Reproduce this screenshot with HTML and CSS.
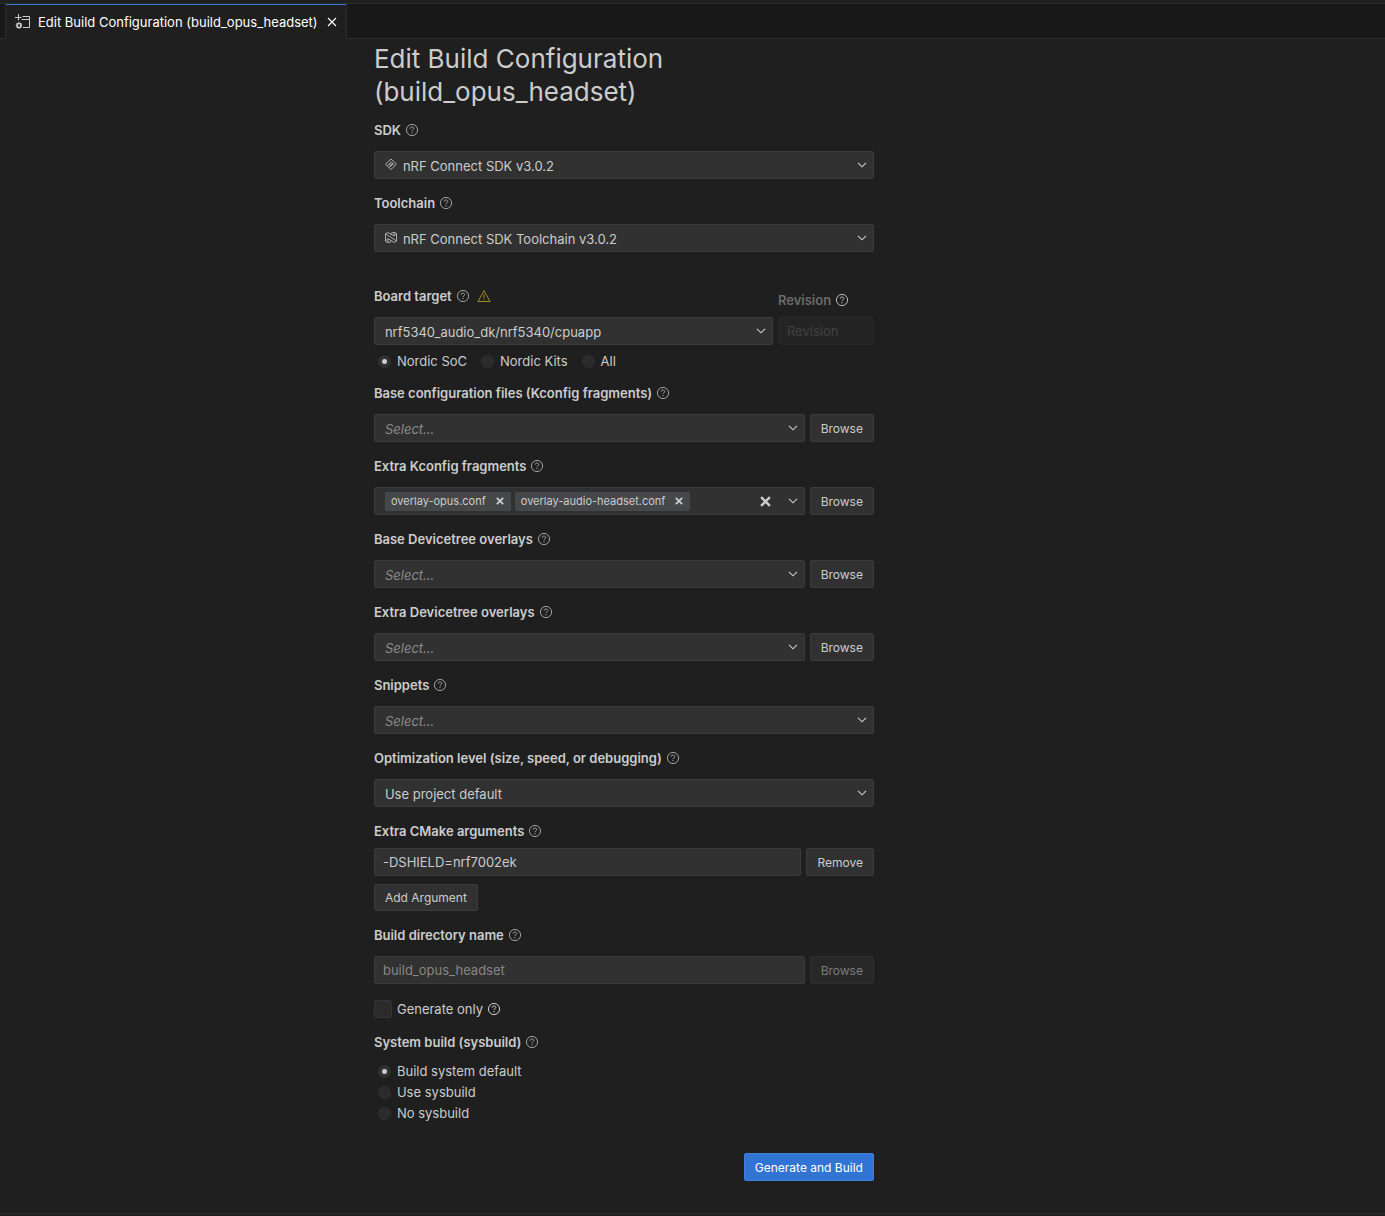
FILE: index.html
```html
<!DOCTYPE html>
<html lang="en">
<head>
<meta charset="utf-8">
<title>Edit Build Configuration</title>
<link rel="stylesheet" href="styles.css">
</head>
<body>
<svg class="defs" aria-hidden="true">
  <symbol id="help" viewBox="0 0 14 14"><circle cx="7" cy="7" r="5.6" fill="none" stroke="currentColor" stroke-width="1"/><path d="M5.2 5.7C5.2 4.5 6 4 7 4s1.8.6 1.8 1.6C8.800 6.700 7 6.700 7 8.100" fill="none" stroke="currentColor" stroke-width="1"/><circle cx="7" cy="9.700" r=".65" fill="currentColor"/></symbol>
  <symbol id="chevron" viewBox="0 0 10 6"><path d="M1 .8l4 4 4-4" fill="none" stroke="currentColor" stroke-width="1.100"/></symbol>
  <symbol id="cross" viewBox="0 0 10 10"><path d="M1 1l8 8M9 1l-8 8" fill="none" stroke="currentColor" stroke-width="2.200"/></symbol>
</svg>

<header class="tabs" role="tablist">
  <div class="tab" role="tab" aria-selected="true">
    <svg class="tab-icon" viewBox="0 0 16 16" fill="none" stroke="currentColor" aria-hidden="true"><path d="M3.500 0v6.500M0 3.500h6.500M7.500 2.500h7v11H8M6.500 5.500h8" stroke-width="1"/><circle cx="4" cy="11.500" r="2" stroke-width="1.600"/><path d="M4 8.200v1M4 13.800v1M.7 11.500h1M6.300 11.500h1M1.700 9.200l.7.700M5.600 13.100l.7.700M6.300 9.200l-.7.700M2.400 13.100l-.7.700" stroke-width="1.200"/></svg>
    <span>Edit Build Configuration (build_opus_headset)</span>
    <button class="tab-close" aria-label="Close tab"><svg viewBox="0 0 10 10" fill="none" stroke="currentColor"><path d="M1 1l8 8M9 1l-8 8" stroke-width="1.100"/></svg></button>
  </div>
</header>

<main class="editor">
  <form class="form">
    <h1>Edit Build Configuration (build_opus_headset)</h1>

    <div class="field">
      <div class="label"><label for="sdk">SDK</label><svg class="help"><use href="#help"/></svg></div>
      <div class="select has-icon">
        <svg class="lead" viewBox="0 0 14 14" fill="none" stroke="currentColor" stroke-width=".9" stroke-linejoin="round"><path d="M7 1L12.500 6.200 7 11.500 1.500 6.200z"/><path d="M3.600 7.500L7.300 4l1.500 1.200-3.300 3.200M5.500 9.300l3.600-3.300 1.300 1.200M5.300 7l1.600-1.500"/></svg>
        <select id="sdk"><option>nRF Connect SDK v3.0.2</option></select>
        <svg class="chevron"><use href="#chevron"/></svg>
      </div>
    </div>

    <div class="field">
      <div class="label"><label for="toolchain">Toolchain</label><svg class="help"><use href="#help"/></svg></div>
      <div class="select has-icon">
        <svg class="lead" viewBox="0 0 14 14" fill="none" stroke="currentColor" stroke-width=".9" stroke-linejoin="round"><path d="M1.500 2.800L3.800 1.500 10 5V2.500L11 1.500l1.500 1.200v7.300L10.200 11.500 4 7.700V10.500L3 11.500 1.500 10z"/><path d="M1.500 2.800L12.500 10M4 7.700L1.500 10M10 5l2.500-2.300M6.500 3L8 1.700h3M7.500 10L6 11.300H3"/></svg>
        <select id="toolchain"><option>nRF Connect SDK Toolchain v3.0.2</option></select>
        <svg class="chevron"><use href="#chevron"/></svg>
      </div>
    </div>

    <div class="board">
      <div class="field board-target">
        <div class="label"><label for="board">Board target</label><svg class="help"><use href="#help"/></svg><svg class="warn" viewBox="0 0 14 14" fill="none" stroke="currentColor"><path d="M7 1.500L13 12.500H1z"/><path d="M7 5v4M7 10v1.200"/></svg></div>
        <div class="select">
          <select id="board"><option>nrf5340_audio_dk/nrf5340/cpuapp</option></select>
          <svg class="chevron"><use href="#chevron"/></svg>
        </div>
      </div>
      <div class="field revision">
        <div class="label muted"><label for="revision">Revision</label><svg class="help"><use href="#help"/></svg></div>
        <input class="text" id="revision" type="text" placeholder="Revision" disabled>
      </div>
    </div>
    <div class="radios inline">
      <label><input type="radio" name="filter" checked>Nordic SoC</label>
      <label><input type="radio" name="filter">Nordic Kits</label>
      <label><input type="radio" name="filter">All</label>
    </div>

    <div class="field">
      <div class="label"><label for="kconfig">Base configuration files (Kconfig fragments)</label><svg class="help"><use href="#help"/></svg></div>
      <div class="row">
        <div class="select empty"><select id="kconfig"><option>Select...</option></select><svg class="chevron"><use href="#chevron"/></svg></div>
        <button type="button" class="button">Browse</button>
      </div>
    </div>

    <div class="field">
      <div class="label"><label for="extra-kconfig">Extra Kconfig fragments</label><svg class="help"><use href="#help"/></svg></div>
      <div class="row">
        <div class="multi">
          <span class="chip">overlay-opus.conf<button type="button" aria-label="Remove overlay-opus.conf"><svg><use href="#cross"/></svg></button></span>
          <span class="chip">overlay-audio-headset.conf<button type="button" aria-label="Remove overlay-audio-headset.conf"><svg><use href="#cross"/></svg></button></span>
          <input id="extra-kconfig" type="text">
          <button type="button" class="clear" aria-label="Clear all"><svg><use href="#cross"/></svg></button>
          <svg class="chevron"><use href="#chevron"/></svg>
        </div>
        <button type="button" class="button">Browse</button>
      </div>
    </div>

    <div class="field">
      <div class="label"><label for="base-dts">Base Devicetree overlays</label><svg class="help"><use href="#help"/></svg></div>
      <div class="row">
        <div class="select empty"><select id="base-dts"><option>Select...</option></select><svg class="chevron"><use href="#chevron"/></svg></div>
        <button type="button" class="button">Browse</button>
      </div>
    </div>

    <div class="field">
      <div class="label"><label for="extra-dts">Extra Devicetree overlays</label><svg class="help"><use href="#help"/></svg></div>
      <div class="row">
        <div class="select empty"><select id="extra-dts"><option>Select...</option></select><svg class="chevron"><use href="#chevron"/></svg></div>
        <button type="button" class="button">Browse</button>
      </div>
    </div>

    <div class="field">
      <div class="label"><label for="snippets">Snippets</label><svg class="help"><use href="#help"/></svg></div>
      <div class="select empty"><select id="snippets"><option>Select...</option></select><svg class="chevron"><use href="#chevron"/></svg></div>
    </div>

    <div class="field">
      <div class="label"><label for="optimization">Optimization level (size, speed, or debugging)</label><svg class="help"><use href="#help"/></svg></div>
      <div class="select"><select id="optimization"><option>Use project default</option></select><svg class="chevron"><use href="#chevron"/></svg></div>
    </div>

    <div class="field tight">
      <div class="label"><label for="cmake">Extra CMake arguments</label><svg class="help"><use href="#help"/></svg></div>
      <div class="row">
        <input class="text" id="cmake" type="text" value="-DSHIELD=nrf7002ek">
        <button type="button" class="button">Remove</button>
      </div>
      <button type="button" class="button add">Add Argument</button>
    </div>

    <div class="field">
      <div class="label"><label for="build-dir">Build directory name</label><svg class="help"><use href="#help"/></svg></div>
      <div class="row">
        <input class="text readonly" id="build-dir" type="text" value="build_opus_headset" readonly>
        <button type="button" class="button" disabled>Browse</button>
      </div>
    </div>

    <div class="check">
      <label><input type="checkbox">Generate only</label><svg class="help"><use href="#help"/></svg>
    </div>

    <div class="label"><span id="sysbuild">System build (sysbuild)</span><svg class="help"><use href="#help"/></svg></div>
    <div class="radios stacked" role="radiogroup" aria-labelledby="sysbuild">
      <label><input type="radio" name="sysbuild" checked>Build system default</label>
      <label><input type="radio" name="sysbuild">Use sysbuild</label>
      <label><input type="radio" name="sysbuild">No sysbuild</label>
    </div>

    <button type="button" class="button primary">Generate and Build</button>
  </form>
</main>
</body>
</html>
```
FILE: styles.css
```css
* { box-sizing: border-box; }

body {
  margin: 0;
  min-height: 100vh;
  display: flex;
  flex-direction: column;
  background: #1f1f1f;
  color: #cccccc;
  font: 13px/18px Inter, "Liberation Sans", sans-serif;
}

button, input, select { font: inherit; color: inherit; margin: 0; }
svg { display: block; flex: none; }
.defs { width: 0; height: 0; position: absolute; }

/* Tab strip */
.tabs {
  display: flex;
  height: 36px;
  margin-top: 3px;
  padding-left: 5px;
  background: #181818;
  border-top: 1px solid #2b2b2b;
  box-shadow: inset 0 -1px #2b2b2b;
}
.tab {
  display: flex;
  align-items: center;
  padding: 0 9px;
  background: #1f1f1f;
  border: 1px solid #2b2b2b;
  border-width: 0 1px;
  box-shadow: inset 0 1px #3a7ad9;
  color: #ffffff;
}
.tab-icon { width: 16px; height: 16px; margin-right: 7px; color: #cccccc; }
.tab-close { display: flex; margin-left: 9px; padding: 0; border: 0; background: none; }
.tab-close svg { width: 10px; height: 10px; }

/* Form column */
.editor {
  flex: 1;
  padding: 3px 16px 0 27%;
  border-bottom: 1px solid #2b2b2b;
  margin-bottom: 2px;
}
.form { display: flex; flex-direction: column; max-width: 500px; }
h1 { margin: 0 0 13px; padding-right: 160px; font-size: 26px; line-height: 33px; font-weight: 400; }

.field { display: flex; flex-direction: column; gap: 12px; margin-bottom: 15px; }
.field.tight { gap: 8px; }
.label { display: flex; align-items: center; height: 18px; font-weight: 600; }
.help { width: 14px; height: 14px; margin-left: 4px; color: #a0a0a0; }
.warn { width: 14px; height: 14px; margin-left: 7px; color: #a08a1c; }
.muted label { color: #6b6b6b; }
.muted .help { color: #b8b8b8; }
.row { display: flex; gap: 5px; }

/* Inputs */
.select, .multi, .text {
  flex: 1;
  min-width: 0;
  min-height: 28px;
  background: #313131;
  border: 1px solid #3c3c3c;
  border-radius: 2px;
}
.select { display: grid; grid-template-columns: auto 1fr auto; align-items: center; }
.select > * { grid-row: 1; }
.select select {
  grid-column: 1 / -1;
  width: 100%;
  height: 26px;
  padding: 2px 28px 0 10px;
  appearance: none;
  border: 0;
  background: none;
}
.select.has-icon select { padding-left: 28px; }
.lead { grid-column: 1; width: 14px; height: 14px; margin-left: 9px; color: #b8b8b8; }
.select.empty select { padding-top: 1px; font-style: italic; color: #8b8b8b; }
.chevron { grid-column: 3; width: 10px; height: 6px; margin-right: 6px; pointer-events: none; }
.text { width: 100%; height: 28px; padding: 0 8px; }
.row .text { width: auto; }
.text:disabled { opacity: .5; background: #2a2a2a; border-color: #303030; }
.text::placeholder { color: #606060; }
.readonly { color: #868686; }

.multi { display: flex; align-items: center; padding-left: 10px; gap: 4px; }
.multi input { flex: 1; width: 0; border: 0; background: none; outline: 0; }
.chip {
  display: flex;
  align-items: center;
  height: 19px;
  padding-left: 6px;
  border-radius: 2px;
  background: #464748;
  font-size: 11px;
  white-space: nowrap;
}
.chip button, .clear { display: flex; align-items: center; border: 0; background: none; }
.chip button { padding: 0 7px 0 10px; }
.chip svg { width: 8px; height: 8px; }
.clear { padding: 0 13px; }
.clear svg { width: 11px; height: 11px; }

/* Buttons */
.button {
  height: 28px;
  padding: 1px 10px 0;
  border: 1px solid #3c3c3c;
  border-radius: 2px;
  background: #313131;
  font-size: 12px;
}
.button:disabled { background: #282828; border-color: #2e2e2e; color: #7c7c7c; }
.add { align-self: flex-start; height: 27px; }
.primary { align-self: flex-end; margin-bottom: 32px; background: #3274d4; border-color: #4080d8; color: #ffffff; }

/* Choices */
.board { display: flex; gap: 5px; margin-top: 20px; }
.board .field { margin-bottom: 7px; }
.board-target { flex: 1; }
.revision { width: 96px; }
.board .revision { gap: 8px; padding-top: 4px; }
.revision .text { flex: none; }
.radios { display: flex; }
.radios label { display: flex; align-items: center; }
.radios input {
  appearance: none;
  width: 13px;
  height: 13px;
  margin: 0 6px 0 4px;
  border: 1px solid #303030;
  border-radius: 50%;
  background: #2b2b2b;
}
.radios input:checked { background: radial-gradient(circle, #cccccc 2px, #313131 3px); }
.inline { gap: 10px; margin-bottom: 14px; }
.stacked { flex-direction: column; gap: 3px; margin: 11px 0 31px; }
.check { display: flex; align-items: center; margin: 1px 0 15px; }
.check label { display: flex; align-items: center; }
.check input {
  appearance: none;
  width: 18px;
  height: 18px;
  margin-right: 5px;
  border: 1px solid #363636;
  border-radius: 3px;
  background: #2b2b2b;
}
.check .help { color: #cccccc; }
```
